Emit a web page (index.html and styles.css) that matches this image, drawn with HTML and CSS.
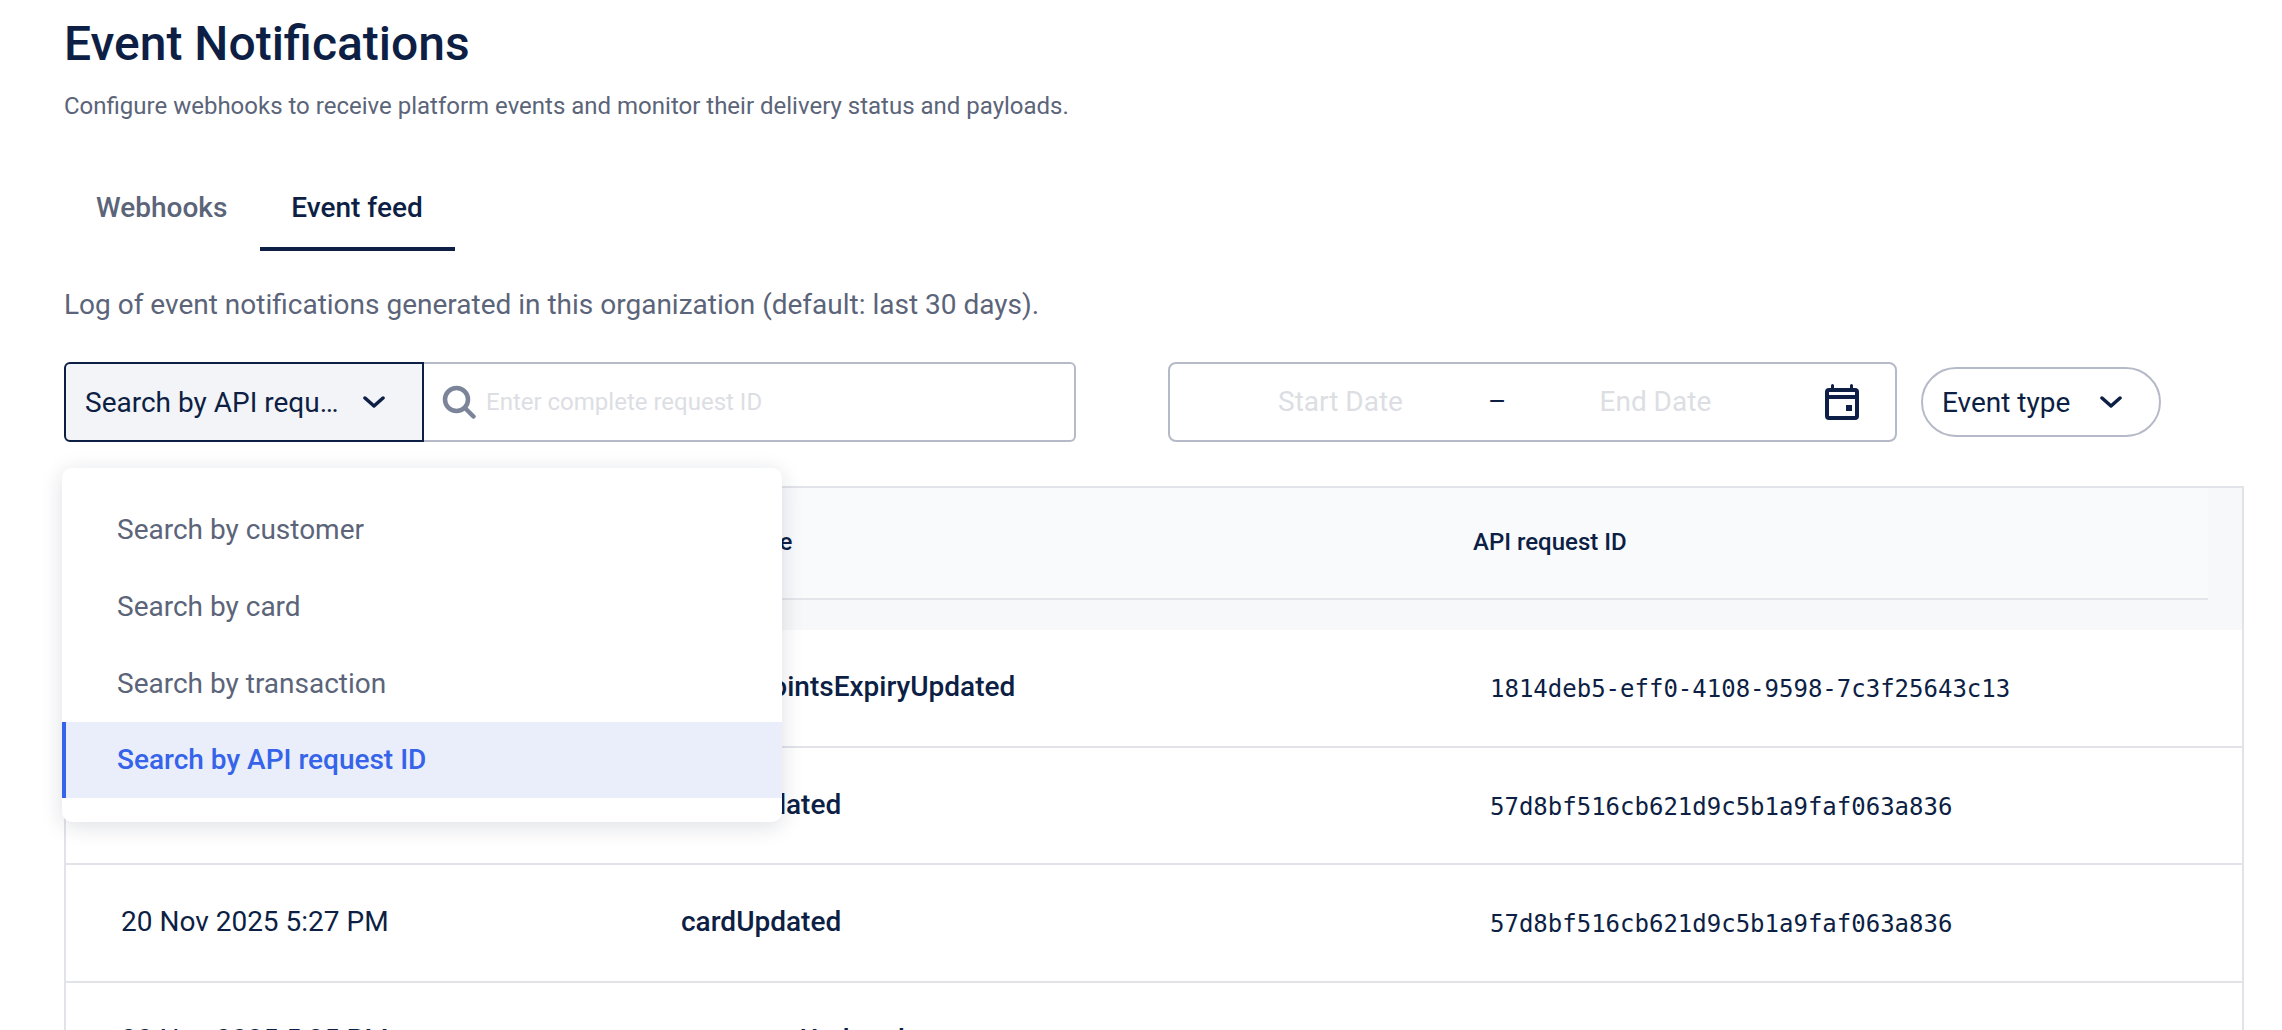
FILE: index.html
```html
<!DOCTYPE html>
<html lang="en">
<head>
<meta charset="utf-8">
<title>Event Notifications</title>
<link rel="stylesheet" href="styles.css">
</head>
<body>
<main class="page">
  <h1 class="title">Event Notifications</h1>
  <p class="subtitle">Configure webhooks to receive platform events and monitor their delivery status and payloads.</p>
  <nav class="tabs">
    <div class="tab">Webhooks</div>
    <div class="tab tab-active">Event feed</div>
  </nav>
  <p class="intro">Log of event notifications generated in this organization (default: last 30 days).</p>
  <div class="toolbar">
    <div class="select">
      <span class="select-label">Search by API request ID</span>
      <svg class="chevron" viewBox="0 0 22 12"><path d="M2 2l9 8 9-8"/></svg>
    </div>
    <div class="search">
      <svg class="search-icon" viewBox="0 0 34 34"><circle cx="14.500" cy="14.500" r="11.500"/><path d="M23 23l8.500 8.500"/></svg>
      <span class="placeholder placeholder-small">Enter complete request ID</span>
    </div>
    <div class="dates">
      <span class="placeholder date-start">Start Date</span>
      <span class="date-dash">–</span>
      <span class="placeholder date-end">End Date</span>
      <svg class="calendar" viewBox="0 0 36 36"><path fill-rule="evenodd" d="M5 4h2V1.500a1.500 1.500 0 0 1 3 0V4h16V1.500a1.500 1.500 0 0 1 3 0V4h2a4 4 0 0 1 4 4v24a4 4 0 0 1-4 4H5a4 4 0 0 1-4-4V8a4 4 0 0 1 4-4zM5 8v3h26V8zM5 15v17h26V15zM22 21h6v6h-6z"/></svg>
    </div>
    <div class="pill">
      <span>Event type</span>
      <svg class="chevron" viewBox="0 0 22 12"><path d="M2 2l9 8 9-8"/></svg>
    </div>
    <ul class="menu">
      <li class="menu-item">Search by customer</li>
      <li class="menu-item">Search by card</li>
      <li class="menu-item">Search by transaction</li>
      <li class="menu-item menu-item-active">Search by API request ID</li>
    </ul>
  </div>
  <section class="table">
    <div class="table-head">
      <div class="head-row">
        <span class="head-date">Date</span>
        <span>Event type</span>
        <span>API request ID</span>
      </div>
    </div>
    <div class="row"><span class="cell-date">20 Nov 2025 5:31 PM</span><span class="cell-event">groupPointsExpiryUpdated</span><span class="cell-id">1814deb5-eff0-4108-9598-7c3f25643c13</span></div>
    <div class="row"><span class="cell-date">20 Nov 2025 5:29 PM</span><span class="cell-event">cardUpdated</span><span class="cell-id">57d8bf516cb621d9c5b1a9faf063a836</span></div>
    <div class="row"><span class="cell-date">20 Nov 2025 5:27 PM</span><span class="cell-event">cardUpdated</span><span class="cell-id">57d8bf516cb621d9c5b1a9faf063a836</span></div>
    <div class="row"><span class="cell-date">20 Nov 2025 5:25 PM</span><span class="cell-event">customerUpdated</span><span class="cell-id"></span></div>
  </section>
</main>
</body>
</html>
```
FILE: styles.css
```css
* { box-sizing: border-box; }
html, body { margin: 0; height: 100%; overflow: hidden; background: #fff; }
body { font-family: Roboto, "Liberation Sans", sans-serif; color: #0d1f44; }
.page { padding: 16px 38px 0 64px; }
.title { margin: 0; font-size: 48px; line-height: 56px; font-weight: 500; }
.subtitle { margin: 18px 0 0; font-size: 24px; line-height: 32px; color: #5b6479; }
.tabs { display: flex; margin-top: 42px; }
.tab { padding: 28px 32px 27px; font-size: 28px; line-height: 32px; font-weight: 500; color: #5b6479; }
.tab-active { padding: 28px 32px 23px 31px; margin-left: 1px; color: #0d1f44; border-bottom: 4px solid #0d1f44; }
.intro { margin: 38px 0 0; font-size: 28px; line-height: 32px; color: #5b6479; }
.toolbar { position: relative; display: flex; align-items: center; height: 80px; margin-top: 41px; font-size: 28px; }
.select { display: flex; align-items: center; justify-content: space-between; width: 360px; height: 80px; padding: 0 37px 0 19px; background: #f3f4f7; border: 2.500px solid #0d1f44; border-radius: 6px 0 0 6px; }
.select-label { width: 254px; overflow: hidden; white-space: nowrap; text-overflow: ellipsis; }
.chevron { width: 22px; height: 12px; flex: none; fill: none; stroke: #0d1f44; stroke-width: 3.500; stroke-linecap: round; stroke-linejoin: round; }
.search { display: flex; align-items: center; gap: 10px; width: 652px; height: 80px; padding-left: 18px; border: 2.500px solid #b6bac8; border-left: 0; border-radius: 0 6px 6px 0; }
.search-icon { width: 34px; height: 34px; flex: none; fill: none; stroke: #7b8499; stroke-width: 4.500; stroke-linecap: round; }
.placeholder { color: #dcdee4; }
.placeholder-small { font-size: 24px; }
.dates { display: flex; align-items: center; width: 729px; height: 80px; margin-left: 92px; padding: 0 0 2px 108px; border: 2.500px solid #b6bac8; border-radius: 8px; }
.date-start { width: 210px; }
.date-dash { width: 111.500px; color: #0d1f44; }
.date-end { width: 224.500px; }
.calendar { width: 36px; height: 36px; flex: none; margin-top: 2px; fill: #0d1f44; }
.pill { display: flex; align-items: center; justify-content: space-between; width: 240px; height: 70px; margin-left: 24px; padding: 0 37px 0 19px; border: 2px solid #b6bac8; border-radius: 35px; }
.menu { position: absolute; left: -2px; top: 106px; z-index: 2; width: 720px; height: 354px; margin: 0; padding: 23.500px 0 0; list-style: none; background: #fff; border-radius: 10px; box-shadow: 0 4px 22px rgba(20, 30, 60, .14); }
.menu-item { display: flex; align-items: center; height: 76.700px; padding-left: 55px; color: #5b6479; }
.menu-item-active { padding-left: 51px; color: #3563e9; font-weight: 500; background: #eaeefa; border-left: 4px solid #3563e9; }
.table { margin-top: 44px; border: 2px solid #e2e3e9; border-bottom: 0; }
.table-head { height: 142px; padding-bottom: 30px; background: #f7f8f9; }
.head-row { display: grid; grid-template-columns: 615px 792px 1fr; align-items: center; height: 112px; padding-bottom: 2px; margin-right: 34px; font-size: 24px; font-weight: 500; background: #f9fafc; border-bottom: 2px solid #e4e5ea; }
.head-date { padding-left: 55px; }
.row { display: grid; grid-template-columns: 615px 809px 1fr; align-items: center; height: 117.500px; border-bottom: 2px solid #e2e3e9; }
.cell-date { padding: 0 0 2px 55px; font-size: 28px; }
.cell-event { padding-bottom: 2px; font-size: 28px; font-weight: 500; }
.cell-id { padding-top: 3px; font-family: "DejaVu Sans Mono", monospace; font-size: 24px; }
```
